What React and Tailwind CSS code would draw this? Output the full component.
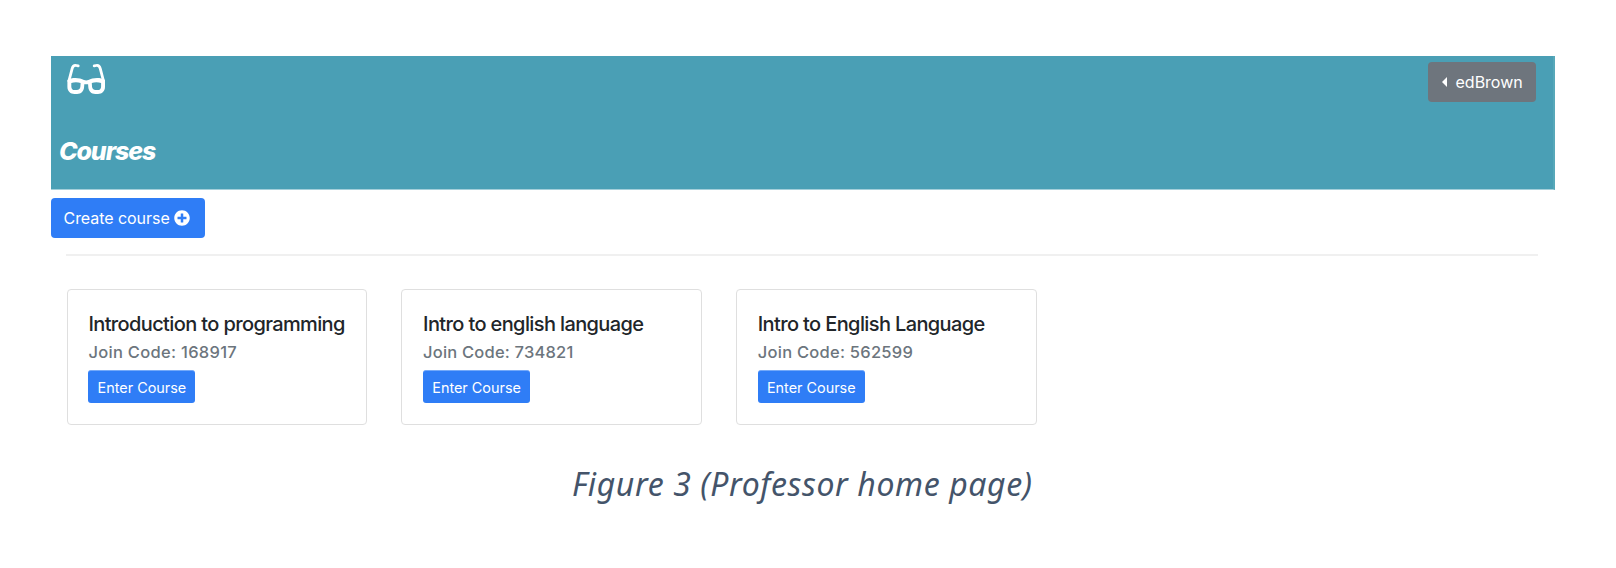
import React from "react";
import { FaPlusCircle } from "react-icons/fa";

const courses = [
  { title: "Introduction to programming", code: "168917", spacing: "tracking-[0.3px]" },
  { title: "Intro to english language", code: "734821", spacing: "tracking-[0.2px]" },
  { title: "Intro to English Language", code: "562599", spacing: "tracking-[0.25px]" },
];

function GlassesIcon() {
  return (
    <svg className="h-[34px] w-[40px]" viewBox="0 0 40 34" fill="none">
      <g stroke="#fff" strokeLinecap="round" strokeLinejoin="round" strokeWidth="2.8">
        <path d="M11.200 3.900L9.400 3.500C7.500 3.100 5.800 4.200 5.200 6.300L1.900 19" />
        <path d="M27.200 3.900L29 3.500C30.900 3.100 32.600 4.200 33.200 6.300L36.500 19" />
      </g>
      <path
        fill="#fff"
        fillRule="evenodd"
        d="M.4 18C4.500 15.200 13 15.500 17 18.100Q19.200 18.800 21.400 18.100C25.400 15.500 33.900 15.200 38 18V24.800C38 29.400 35 32 31 32H28.300C24.300 32 21.500 29.200 21.300 25L21.100 22.300H17.300L17.100 25C16.900 29.200 14.100 32 10.100 32H7.400C3.400 32 .4 29.400 .4 24.800ZM4.300 21V24.400C4.300 26.800 5.600 28 7.800 28H9.800C12 28 13.200 26.800 13.400 24.600L13.600 21C11 19.900 7 19.900 4.300 21ZM34.100 21V24.400C34.100 26.800 32.800 28 30.600 28H28.600C26.400 28 25.200 26.800 25 24.600L24.800 21C27.400 19.900 31.400 19.900 34.100 21Z"
      />
    </svg>
  );
}

function CourseCard({ title, code, spacing }) {
  return (
    <article className="flex h-[136px] w-[300.6px] flex-col items-start rounded-[4px] border border-[#dfdfdf] bg-white pl-[20.8px] pt-[22px]">
      <h2 className="h-[25px] whitespace-nowrap text-[20px] font-medium leading-[25px] tracking-[-0.62px] text-[#212529]">{title}</h2>
      <p className={`mt-[5px] h-[20px] whitespace-nowrap text-[16.5px] font-medium leading-[20px] text-[#6c757d] ${spacing}`}>
        Join Code: {code}
      </p>
      <button className="mt-[8px] flex h-[33px] w-[107px] items-center justify-center whitespace-nowrap rounded-[3px] border-t border-[#74a9f9] bg-[#2f7df6] pt-[1px] text-[14.4px] text-white">
        Enter Course
      </button>
    </article>
  );
}

export default function App() {
  return (
    <div className="h-[568px] w-[1616px] bg-white pl-[51px] pt-[56px] font-['Inter',sans-serif]">
      <header className="flex h-[134px] w-[1504px] flex-col border-b border-r-2 border-b-[#a4cfda] border-r-[#57a8b9] bg-[#4a9fb5]">
        <div className="flex justify-between pl-[16px] pr-[17px] pt-[6px]">
          <GlassesIcon />
          <button className="flex h-[40px] w-[108px] items-center rounded-[4px] bg-[#6e757d] pl-[14px] text-[16px] text-white">
            <svg className="mr-[8.5px] h-[10px] w-[5px]" viewBox="0 0 5 10" fill="currentColor">
              <path d="M5 0v10L0 5z" />
            </svg>
            <span>edBrown</span>
          </button>
        </div>
        <h1 className="mt-[34px] pl-[8px] text-[25px] font-extrabold italic leading-[30px] tracking-[-1.1px] text-white">Courses</h1>
      </header>
      <button className="mt-[8px] flex h-[40px] w-[154px] items-center whitespace-nowrap rounded-[4px] bg-[#2f7df6] pl-[12.5px] text-[16px] text-white">
        <span className="tracking-[-0.05px]">Create course</span>
        <FaPlusCircle className="ml-[4.5px] h-[16px] w-[16px]" />
      </button>
      <hr className="ml-[15px] mt-[16px] h-[2px] w-[1472px] border-0 bg-[#f0f0f0]" />
      <main className="ml-[15.6px] mt-[33px] flex gap-[34.1px]">
        {courses.map((course) => (
          <CourseCard key={course.code} {...course} />
        ))}
      </main>
      <p className="ml-[521px] mt-[37px] whitespace-nowrap font-['Noto_Sans',sans-serif] text-[32px] italic leading-[44px] tracking-[0.6px] text-[#44546a]">
        Figure 3 (Professor home page)
      </p>
    </div>
  );
}
